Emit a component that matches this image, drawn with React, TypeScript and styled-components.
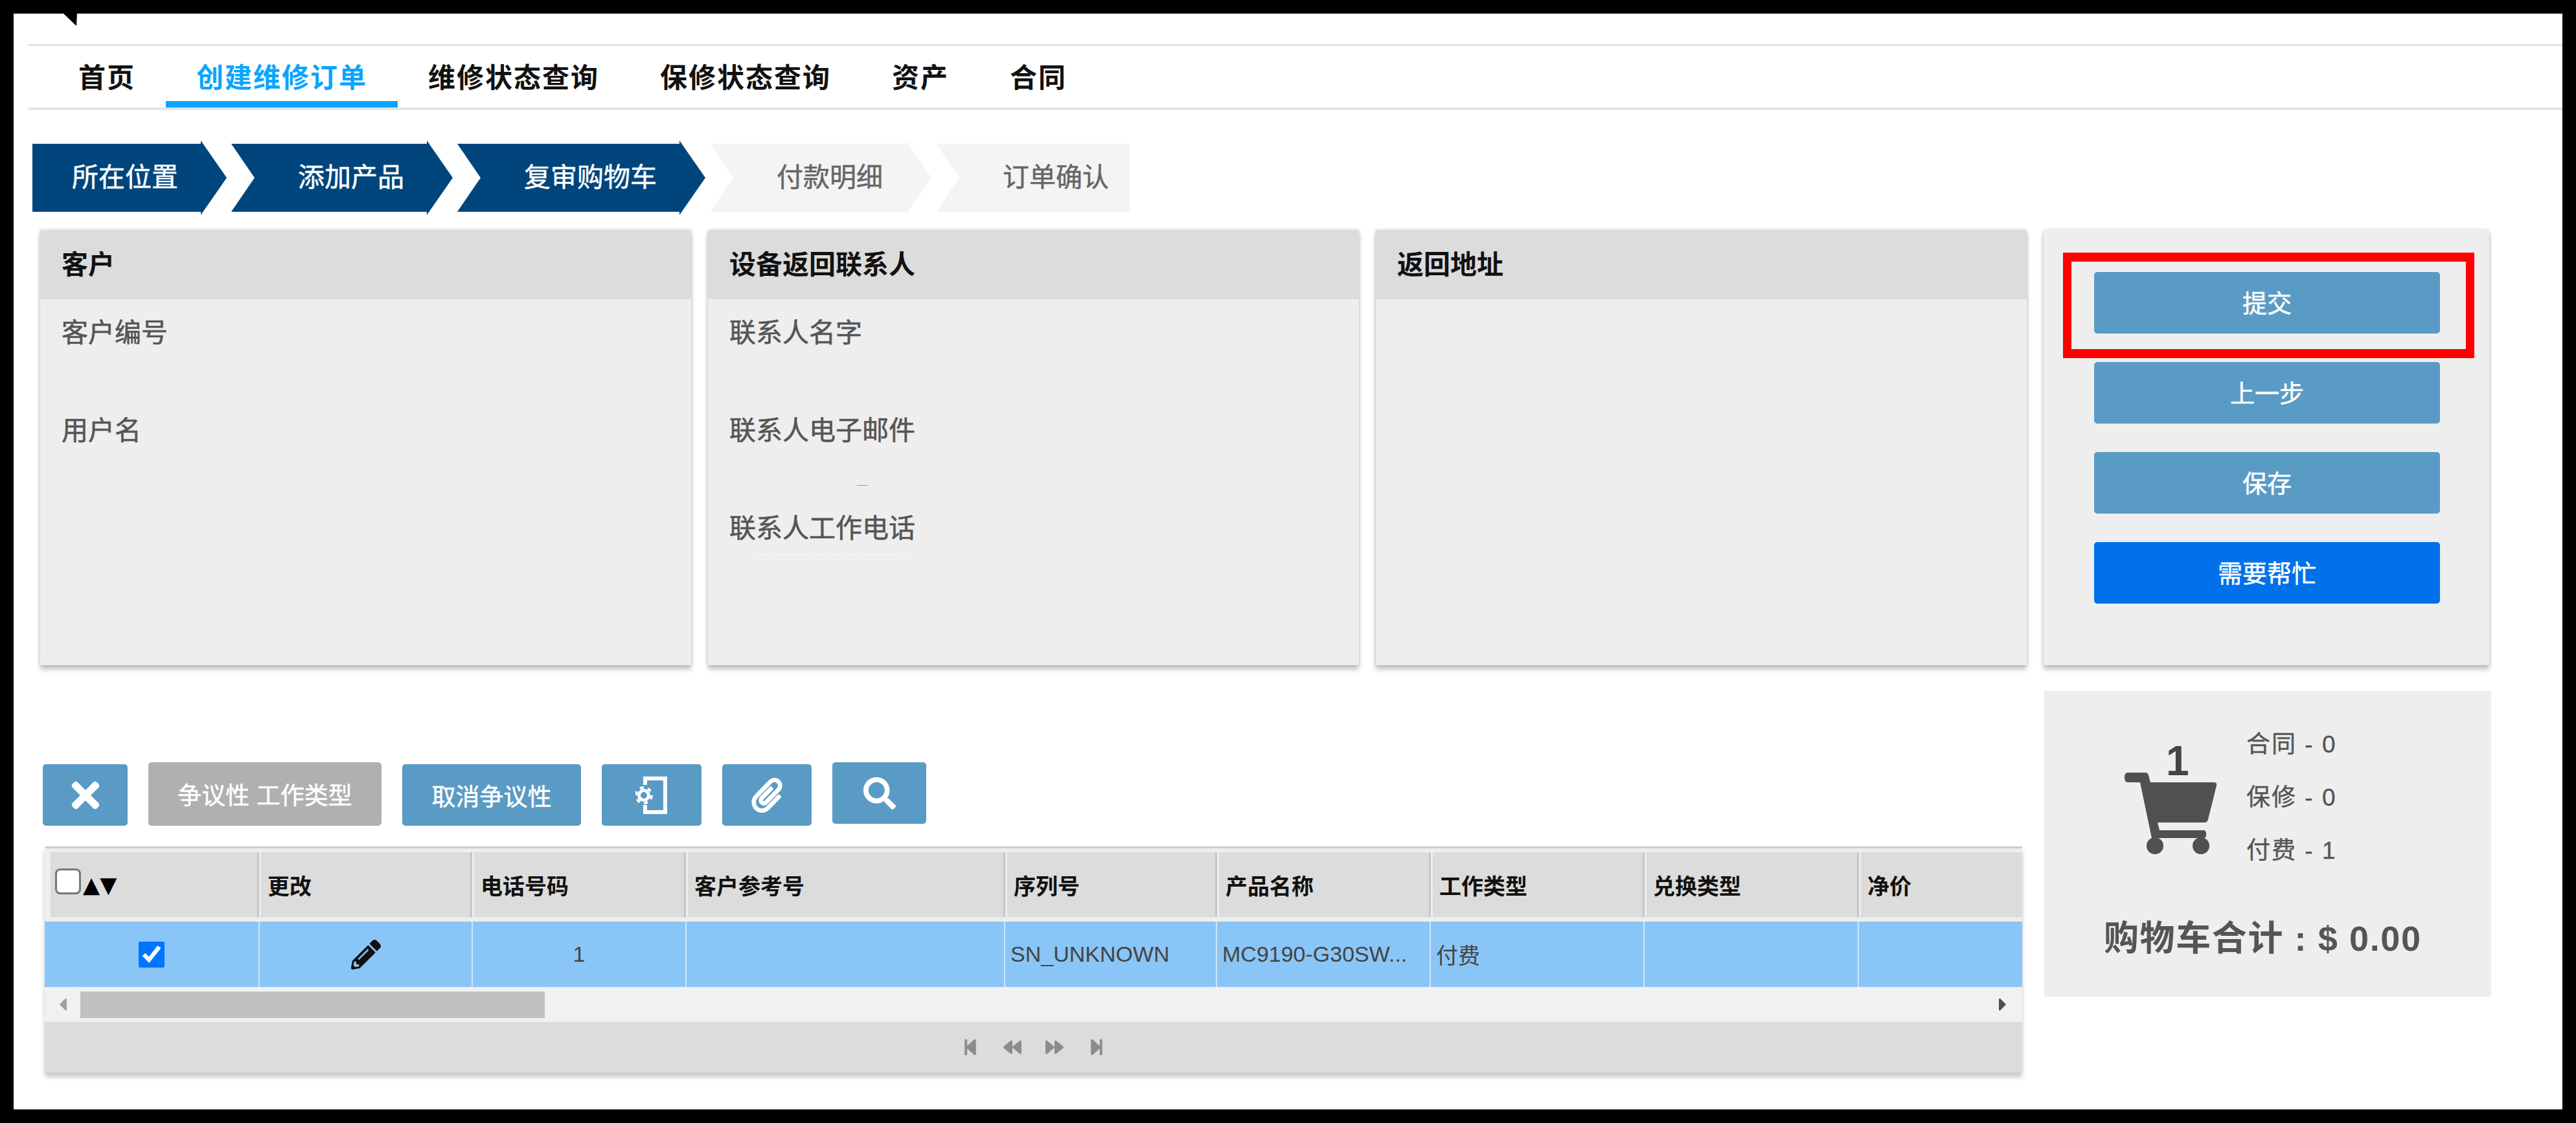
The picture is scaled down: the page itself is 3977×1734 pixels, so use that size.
import React from "react";
import styled, { createGlobalStyle } from "styled-components";
import {
  FaTimes,
  FaPaperclip,
  FaSearch,
  FaPencilAlt,
  FaStepBackward,
  FaBackward,
  FaForward,
  FaStepForward,
  FaCaretLeft,
  FaCaretRight,
} from "react-icons/fa";

const Global = createGlobalStyle`
  html, body { margin: 0; padding: 0; background: #000; }
  * { box-sizing: border-box; }
  body { font-family: "Liberation Sans", "Noto Sans CJK SC", sans-serif; }
`;

const Frame = styled.div`
  width: 3977px;
  height: 1734px;
  padding: 21px;
  background: #000;
`;

const Sheet = styled.div`
  position: relative;
  height: 1692px;
  background: #fff;
  overflow: hidden;
`;

const CornerMark = styled.svg`
  position: absolute;
  left: 77px;
  top: 0;
`;

const TopBar = styled.div`
  height: 50px;
  margin-left: 23px;
  border-bottom: 3px solid #e2e2e2;
`;

const Nav = styled.nav`
  display: flex;
  height: 99px;
  margin-left: 23px;
  padding-left: 30px;
  border-bottom: 4px solid #e4e4e4;
`;

const Tab = styled.div<{ $active?: boolean }>`
  height: 95px;
  padding: 28px 47px 0;
  font-size: 42px;
  line-height: 44px;
  letter-spacing: 2px;
  font-weight: 700;
  color: ${(p) => (p.$active ? "#0aa5ff" : "#111")};
  border-bottom: 10px solid ${(p) => (p.$active ? "#0aa5ff" : "transparent")};
`;

const Crumbs = styled.div`
  display: flex;
  gap: 7px;
  margin-top: 47px;
  padding-left: 29px;
`;

const Crumb = styled.div<{ $done?: boolean; $first?: boolean; $last?: boolean }>`
  display: flex;
  align-items: center;
  height: 115px;
  padding: 0 ${(p) => (p.$last ? "32px" : "75px")} 10px ${(p) => (p.$first ? "61px" : "103px")};
  font-size: 41px;
  -webkit-text-stroke: 0.5px currentColor;
  color: ${(p) => (p.$done ? "#fff" : "#666")};
  background: ${(p) => (p.$done ? "#00457c" : "#f4f4f4")};
  clip-path: polygon(
    0 5px,
    ${(p) =>
      p.$last
        ? "100% 5px, 100% calc(100% - 5px)"
        : "calc(100% - 40px) 5px, calc(100% - 40px) 0, 100% 50%, calc(100% - 40px) 100%, calc(100% - 40px) calc(100% - 5px)"},
    0 calc(100% - 5px)
    ${(p) => (p.$first ? "" : ", 36px 50%")}
  );
`;

const PanelRow = styled.div`
  display: flex;
  margin-top: 23px;
  padding-left: 41px;
`;

const Panel = styled.section<{ $side?: boolean }>`
  position: relative;
  flex: none;
  width: ${(p) => (p.$side ? "688px" : "1005px")};
  height: 672px;
  margin-right: ${(p) => (p.$side ? "0" : "26px")};
  background: #eee;
  box-shadow: 0 7px 7px rgba(0, 0, 0, 0.22), 0 0 5px rgba(0, 0, 0, 0.16);
`;

const PanelHead = styled.h3`
  display: flex;
  align-items: center;
  height: 107px;
  margin: 0;
  padding: 0 0 8px 33px;
  background: #dcdcdc;
  font-size: 41px;
  font-weight: 700;
  color: #111;
`;

const PanelBody = styled.div`
  padding: 32px 0 0 33px;
`;

const Field = styled.div`
  position: relative;
  height: 151px;
  font-size: 41px;
  line-height: 41px;
  -webkit-text-stroke: 0.6px #555;
  color: #555;
`;

const ResidueDash = styled.span`
  position: absolute;
  left: 197px;
  top: 104px;
  width: 17px;
  height: 1px;
  background: #999;
`;

const ResidueDots = styled.span`
  position: absolute;
  left: 37px;
  top: 60px;
  width: 240px;
  border-top: 1px dashed #fff;
`;

const SideStack = styled.div`
  display: flex;
  flex-direction: column;
  gap: 44px;
  padding: 65px 0 0 78px;
`;

const ActionButton = styled.button<{ $help?: boolean }>`
  width: 534px;
  height: 95px;
  padding: 0 0 5px;
  border: 0;
  border-radius: 5px;
  background: ${(p) => (p.$help ? "#0071e8" : "#5a9bc5")};
  color: #fff;
  font: inherit;
  font-size: 38px;
  -webkit-text-stroke: 0.5px #fff;
`;

const Highlight = styled.div`
  position: absolute;
  left: 30px;
  top: 35px;
  width: 635px;
  height: 163px;
  border: solid #f00;
  border-width: 14px 13px;
`;

const Lower = styled.div`
  display: flex;
  gap: 34px;
  margin-top: 40px;
  padding-left: 45px;
`;

const LeftColumn = styled.div`
  flex: none;
  width: 3056px;
  padding-top: 110px;
`;

const Toolbar = styled.div`
  display: flex;
  align-items: flex-start;
  gap: 32px;
  height: 98px;
  margin-bottom: 32px;
`;

const ToolButton = styled.button<{ $w: number; $h?: number; $top?: number; $muted?: boolean }>`
  display: flex;
  align-items: center;
  justify-content: center;
  flex: none;
  width: ${(p) => p.$w}px;
  height: ${(p) => p.$h ?? 95}px;
  margin-top: ${(p) => p.$top ?? 3}px;
  padding: 0;
  border: 0;
  border-radius: 5px;
  background: ${(p) => (p.$muted ? "#b0b0b0" : "#5a9bc5")};
  color: #fff;
  font: inherit;
  font-size: 37px;
  -webkit-text-stroke: 0.5px currentColor;
`;

const Table = styled.div`
  width: 3053px;
  margin-left: 3px;
  padding-top: 6px;
  background: #eee;
  border-top: 3px solid #ccc;
  box-shadow: 0 7px 7px rgba(0, 0, 0, 0.22);
`;

const HeadRow = styled.div`
  display: grid;
  grid-template-columns: 331px 329px 330px 493px 327px 330px 330px 331px 252px;
  height: 100px;
  margin-bottom: 7px;
`;

const HeadCell = styled.div<{ $first?: boolean }>`
  display: flex;
  align-items: center;
  margin-left: ${(p) => (p.$first ? "9px" : "0")};
  padding-left: ${(p) => (p.$first ? "7px" : "10px")};
  border-left: ${(p) => (p.$first ? "0" : "3px solid #eee")};
  border-right: 3px solid #c6c6c6;
  background: #dcdcdc;
  font-size: 34px;
  font-weight: 700;
  color: #111;
  &:last-child {
    border-right: 0;
  }
`;

const HeadCheck = styled.input`
  appearance: none;
  flex: none;
  width: 40px;
  height: 40px;
  margin: 0 3px 10px 0;
  border: 3px solid #777;
  border-radius: 8px;
  background: #fff;
`;

const SortMarks = styled.span`
  font-family: "DejaVu Sans", sans-serif;
  font-size: 34px;
  line-height: 1;
  color: #000;
`;

const BodyRow = styled.div`
  display: grid;
  grid-template-columns: 332px 329px 330px 492px 327px 330px 330px 331px 252px;
  height: 101px;
  background: #8ac5f7;
`;

const BodyCell = styled.div<{ $center?: boolean }>`
  display: flex;
  align-items: center;
  justify-content: ${(p) => (p.$center ? "center" : "flex-start")};
  padding-left: ${(p) => (p.$center ? "0" : "8px")};
  border-right: 2px solid #cfe5f9;
  font-size: 34px;
  color: #444;
  white-space: nowrap;
  overflow: hidden;
  &:last-child {
    border-right: 0;
  }
`;

const RowCheck = styled.input`
  width: 40px;
  height: 42px;
  margin: 0;
  accent-color: #0075ff;
`;

const ScrollBar = styled.div`
  display: flex;
  align-items: center;
  height: 54px;
  padding: 0 14px 0 12px;
  background: #f1f1f1;
`;

const ScrollArrow = styled.span<{ $dark?: boolean }>`
  display: flex;
  flex: none;
  width: 43px;
  justify-content: ${(p) => (p.$dark ? "flex-end" : "flex-start")};
  font-size: 32px;
  color: ${(p) => (p.$dark ? "#505050" : "#a0a0a0")};
  margin-left: ${(p) => (p.$dark ? "auto" : "0")};
`;

const ScrollThumb = styled.div`
  width: 717px;
  height: 41px;
  background: #c1c1c1;
`;

const Pager = styled.div`
  display: flex;
  align-items: center;
  justify-content: center;
  gap: 37px;
  height: 78px;
  background: #dcdcdc;
  color: #8c8c8c;
  font-size: 28px;
`;

const CartPanel = styled.aside`
  flex: none;
  width: 690px;
  height: 472px;
  background: #eee;
  padding: 42px 0 0 104px;
`;

const CartTop = styled.div`
  display: flex;
  align-items: flex-start;
  gap: 18px;
`;

const CartFigure = styled.div`
  position: relative;
  flex: none;
  width: 190px;
  height: 190px;
  margin-top: 31px;
  color: #505050;
`;

const CartBadge = styled.span`
  position: absolute;
  left: 84px;
  top: 3px;
  font-size: 64px;
  line-height: 64px;
  font-weight: 700;
  color: #444;
`;

const CartStats = styled.ul`
  margin: 0;
  padding: 0;
  list-style: none;
`;

const CartStat = styled.li`
  height: 82px;
  font-size: 37px;
  line-height: 82px;
  letter-spacing: 2px;
  color: #555;
  -webkit-text-stroke: 0.4px #555;
`;

const CartTotal = styled.div`
  margin: 64px 0 0 -12px;
  font-size: 54px;
  line-height: 60px;
  font-weight: 700;
  letter-spacing: 1.6px;
  color: #555;
  white-space: nowrap;
`;

const columns = ["更改", "电话号码", "客户参考号", "序列号", "产品名称", "工作类型", "兑换类型", "净价"];

const ExportIcon = () => (
  <svg width="50" height="58" viewBox="0 0 50 58" fill="none" stroke="#fff">
    <path d="M15 13 V3 H46 V55 H15 V44" strokeWidth="6" />
    <circle cx="13" cy="29" r="7.5" strokeWidth="5" />
    <circle cx="13" cy="29" r="12" strokeWidth="4" strokeDasharray="6 6.5" />
  </svg>
);

const CartIcon = () => (
  <svg width="190" height="190" viewBox="0 0 190 190" fill="currentColor">
    <path d="M25 53 H52 Q56 53 57 57 L60 68 H158 Q163 68 162 73 L149 125 Q148 130 143 130 H71 L74 142 H142 Q146 142 146 147 V150 Q146 154 142 154 H62 L44 68 H25 Q20 68 20 60 Q20 53 25 53 Z" />
    <circle cx="67" cy="166" r="13" />
    <circle cx="138" cy="166" r="13" />
  </svg>
);

export default function App() {
  return (
    <Frame>
      <Global />
      <Sheet>
        <CornerMark width="22" height="20" viewBox="0 0 22 20">
          <path d="M0 0 H21 L20 19 Z" fill="#000" />
        </CornerMark>
        <TopBar />
        <Nav>
          <Tab>首页</Tab>
          <Tab $active>创建维修订单</Tab>
          <Tab>维修状态查询</Tab>
          <Tab>保修状态查询</Tab>
          <Tab>资产</Tab>
          <Tab>合同</Tab>
        </Nav>
        <Crumbs>
          <Crumb $done $first>所在位置</Crumb>
          <Crumb $done>添加产品</Crumb>
          <Crumb $done>复审购物车</Crumb>
          <Crumb>付款明细</Crumb>
          <Crumb $last>订单确认</Crumb>
        </Crumbs>
        <PanelRow>
          <Panel>
            <PanelHead>客户</PanelHead>
            <PanelBody>
              <Field>客户编号</Field>
              <Field>用户名</Field>
            </PanelBody>
          </Panel>
          <Panel>
            <PanelHead>设备返回联系人</PanelHead>
            <PanelBody>
              <Field>联系人名字</Field>
              <Field>
                联系人电子邮件
                <ResidueDash />
              </Field>
              <Field>
                联系人工作电话
                <ResidueDots />
              </Field>
            </PanelBody>
          </Panel>
          <Panel>
            <PanelHead>返回地址</PanelHead>
          </Panel>
          <Panel $side>
            <SideStack>
              <ActionButton>提交</ActionButton>
              <ActionButton>上一步</ActionButton>
              <ActionButton>保存</ActionButton>
              <ActionButton $help>需要帮忙</ActionButton>
            </SideStack>
            <Highlight />
          </Panel>
        </PanelRow>
        <Lower>
          <LeftColumn>
            <Toolbar>
              <ToolButton $w={131}>
                <FaTimes size={62} />
              </ToolButton>
              <ToolButton $w={360} $h={98} $top={0} $muted>
                争议性 工作类型
              </ToolButton>
              <ToolButton $w={276}>取消争议性</ToolButton>
              <ToolButton $w={154}>
                <ExportIcon />
              </ToolButton>
              <ToolButton $w={138}>
                <FaPaperclip size={54} />
              </ToolButton>
              <ToolButton $w={145} $top={0}>
                <FaSearch size={50} />
              </ToolButton>
            </Toolbar>
            <Table>
              <HeadRow>
                <HeadCell $first>
                  <HeadCheck type="checkbox" />
                  <SortMarks>▲▼</SortMarks>
                </HeadCell>
                {columns.map((c) => (
                  <HeadCell key={c}>{c}</HeadCell>
                ))}
              </HeadRow>
              <BodyRow>
                <BodyCell $center>
                  <RowCheck type="checkbox" defaultChecked />
                </BodyCell>
                <BodyCell $center>
                  <FaPencilAlt size={46} color="#111" />
                </BodyCell>
                <BodyCell $center>1</BodyCell>
                <BodyCell />
                <BodyCell>SN_UNKNOWN</BodyCell>
                <BodyCell>MC9190-G30SW...</BodyCell>
                <BodyCell>付费</BodyCell>
                <BodyCell />
                <BodyCell />
              </BodyRow>
              <ScrollBar>
                <ScrollArrow>
                  <FaCaretLeft />
                </ScrollArrow>
                <ScrollThumb />
                <ScrollArrow $dark>
                  <FaCaretRight />
                </ScrollArrow>
              </ScrollBar>
              <Pager>
                <FaStepBackward />
                <FaBackward />
                <FaForward />
                <FaStepForward />
              </Pager>
            </Table>
          </LeftColumn>
          <CartPanel>
            <CartTop>
              <CartFigure>
                <CartIcon />
                <CartBadge>1</CartBadge>
              </CartFigure>
              <CartStats>
                <CartStat>合同 - 0</CartStat>
                <CartStat>保修 - 0</CartStat>
                <CartStat>付费 - 1</CartStat>
              </CartStats>
            </CartTop>
            <CartTotal>购物车合计 : $ 0.00</CartTotal>
          </CartPanel>
        </Lower>
      </Sheet>
    </Frame>
  );
}
